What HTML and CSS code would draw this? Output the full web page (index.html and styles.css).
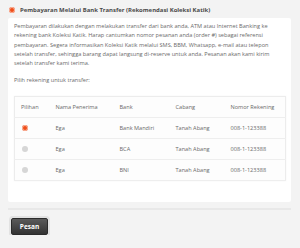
FILE: index.html
```html
<!DOCTYPE html>
<html lang="id">
<head>
    <meta charset="UTF-8">
    <meta name="viewport" content="width=device-width, initial-scale=1.0">
    <title>Pembayaran</title>
    <link rel="stylesheet" href="styles.css">
</head>
<body>
    <div class="method">
        <label class="method-title">
            <span class="dot dot-on"></span>
            Pembayaran Melalui Bank Transfer (Rekomendasi Koleksi Katik)
        </label>

        <div class="method-box">
            <p>Pembayaran dilakukan dengan melakukan transfer dari bank anda, ATM atau Internet Banking ke rekening bank Koleksi Katik. Harap cantumkan nomor pesanan anda (order #) sebagai referensi pembayaran. Segera informasikan Koleksi Katik melalui SMS, BBM, Whatsapp, e-mail atau telepon setelah transfer, sehingga barang dapat langsung di-reserve untuk anda. Pesanan akan kami kirim setelah transfer kami terima.</p>
            <p class="pick">Pilih rekening untuk transfer:</p>

            <table class="accounts">
                <colgroup>
                    <col class="c-pick">
                    <col class="c-name">
                    <col class="c-bank">
                    <col class="c-branch">
                    <col>
                </colgroup>
                <thead>
                    <tr>
                        <th>Pilihan</th>
                        <th>Nama Penerima</th>
                        <th>Bank</th>
                        <th>Cabang</th>
                        <th>Nomor Rekening</th>
                    </tr>
                </thead>
                <tbody>
                    <tr>
                        <td><span class="dot dot-on"></span></td>
                        <td>Ega</td>
                        <td>Bank Mandiri</td>
                        <td>Tanah Abang</td>
                        <td>008-1-123388</td>
                    </tr>
                    <tr>
                        <td><span class="dot"></span></td>
                        <td>Ega</td>
                        <td>BCA</td>
                        <td>Tanah Abang</td>
                        <td>008-1-123388</td>
                    </tr>
                    <tr>
                        <td><span class="dot"></span></td>
                        <td>Ega</td>
                        <td>BNI</td>
                        <td>Tanah Abang</td>
                        <td>008-1-123388</td>
                    </tr>
                </tbody>
            </table>
        </div>
    </div>

    <div class="actions">
        <button class="btn-order">Pesan</button>
    </div>
</body>
</html>
```

FILE: styles.css
```css
body {
    margin: 0;
    padding: 4px 9px 0 8px;
    background: #f3f3f3;
    font-family: "Open Sans", Arial, sans-serif;
    color: #6a6a6a;
    font-size: 5.6px;
}
.method-title {
    display: flex;
    align-items: center;
    gap: 5px;
    height: 12px;
    padding-left: 1px;
    font-weight: bold;
    font-size: 5.95px;
    color: #4a4a4a;
}
.dot {
    display: inline-block;
    width: 6px;
    height: 6px;
    border-radius: 50%;
    background: #d6d6d6;
    vertical-align: middle;
}
.dot-on {
    background: #f04e1a;
    box-shadow: inset 0 0 0 1px #f8b39b;
}
.method-box {
    background: #fff;
    margin-top: 2px;
    padding: 4px 5px 21px 6px;
    border-radius: 2px;
}
.method-box p {
    margin: 0 0 8px 0;
    line-height: 9.3px;
}
.method-box .pick {
    margin-bottom: 10px;
}
.accounts {
    width: 100%;
    table-layout: fixed;
    border-collapse: collapse;
    border: 1px solid #ececec;
    background: #fdfdfd;
    box-shadow: 0 0 2px rgba(0, 0, 0, 0.04);
}
.c-pick { width: 35px; }
.c-name { width: 64px; }
.c-bank { width: 56px; }
.c-branch { width: 55px; }
.accounts th,
.accounts td {
    text-align: left;
    font-weight: normal;
    height: 20px;
    padding: 0 0 0 6px;
    border-bottom: 1px solid #eeeeee;
    white-space: nowrap;
}
.accounts td:first-child {
    padding-left: 7px;
}
.actions {
    margin-top: 6px;
    border-top: 2px solid #e8e8e8;
    padding-top: 8px;
}
.btn-order {
    display: block;
    margin-left: 3px;
    width: 37px;
    height: 17px;
    border: 1px solid #2b2b2b;
    border-radius: 2px;
    background: linear-gradient(#5a5a5a, #333);
    color: #fff;
    font-family: "Open Sans", Arial, sans-serif;
    font-weight: bold;
    font-size: 6.5px;
    box-shadow: 0 0 0 2px #e2e2e2;
    padding: 0;
}
```
